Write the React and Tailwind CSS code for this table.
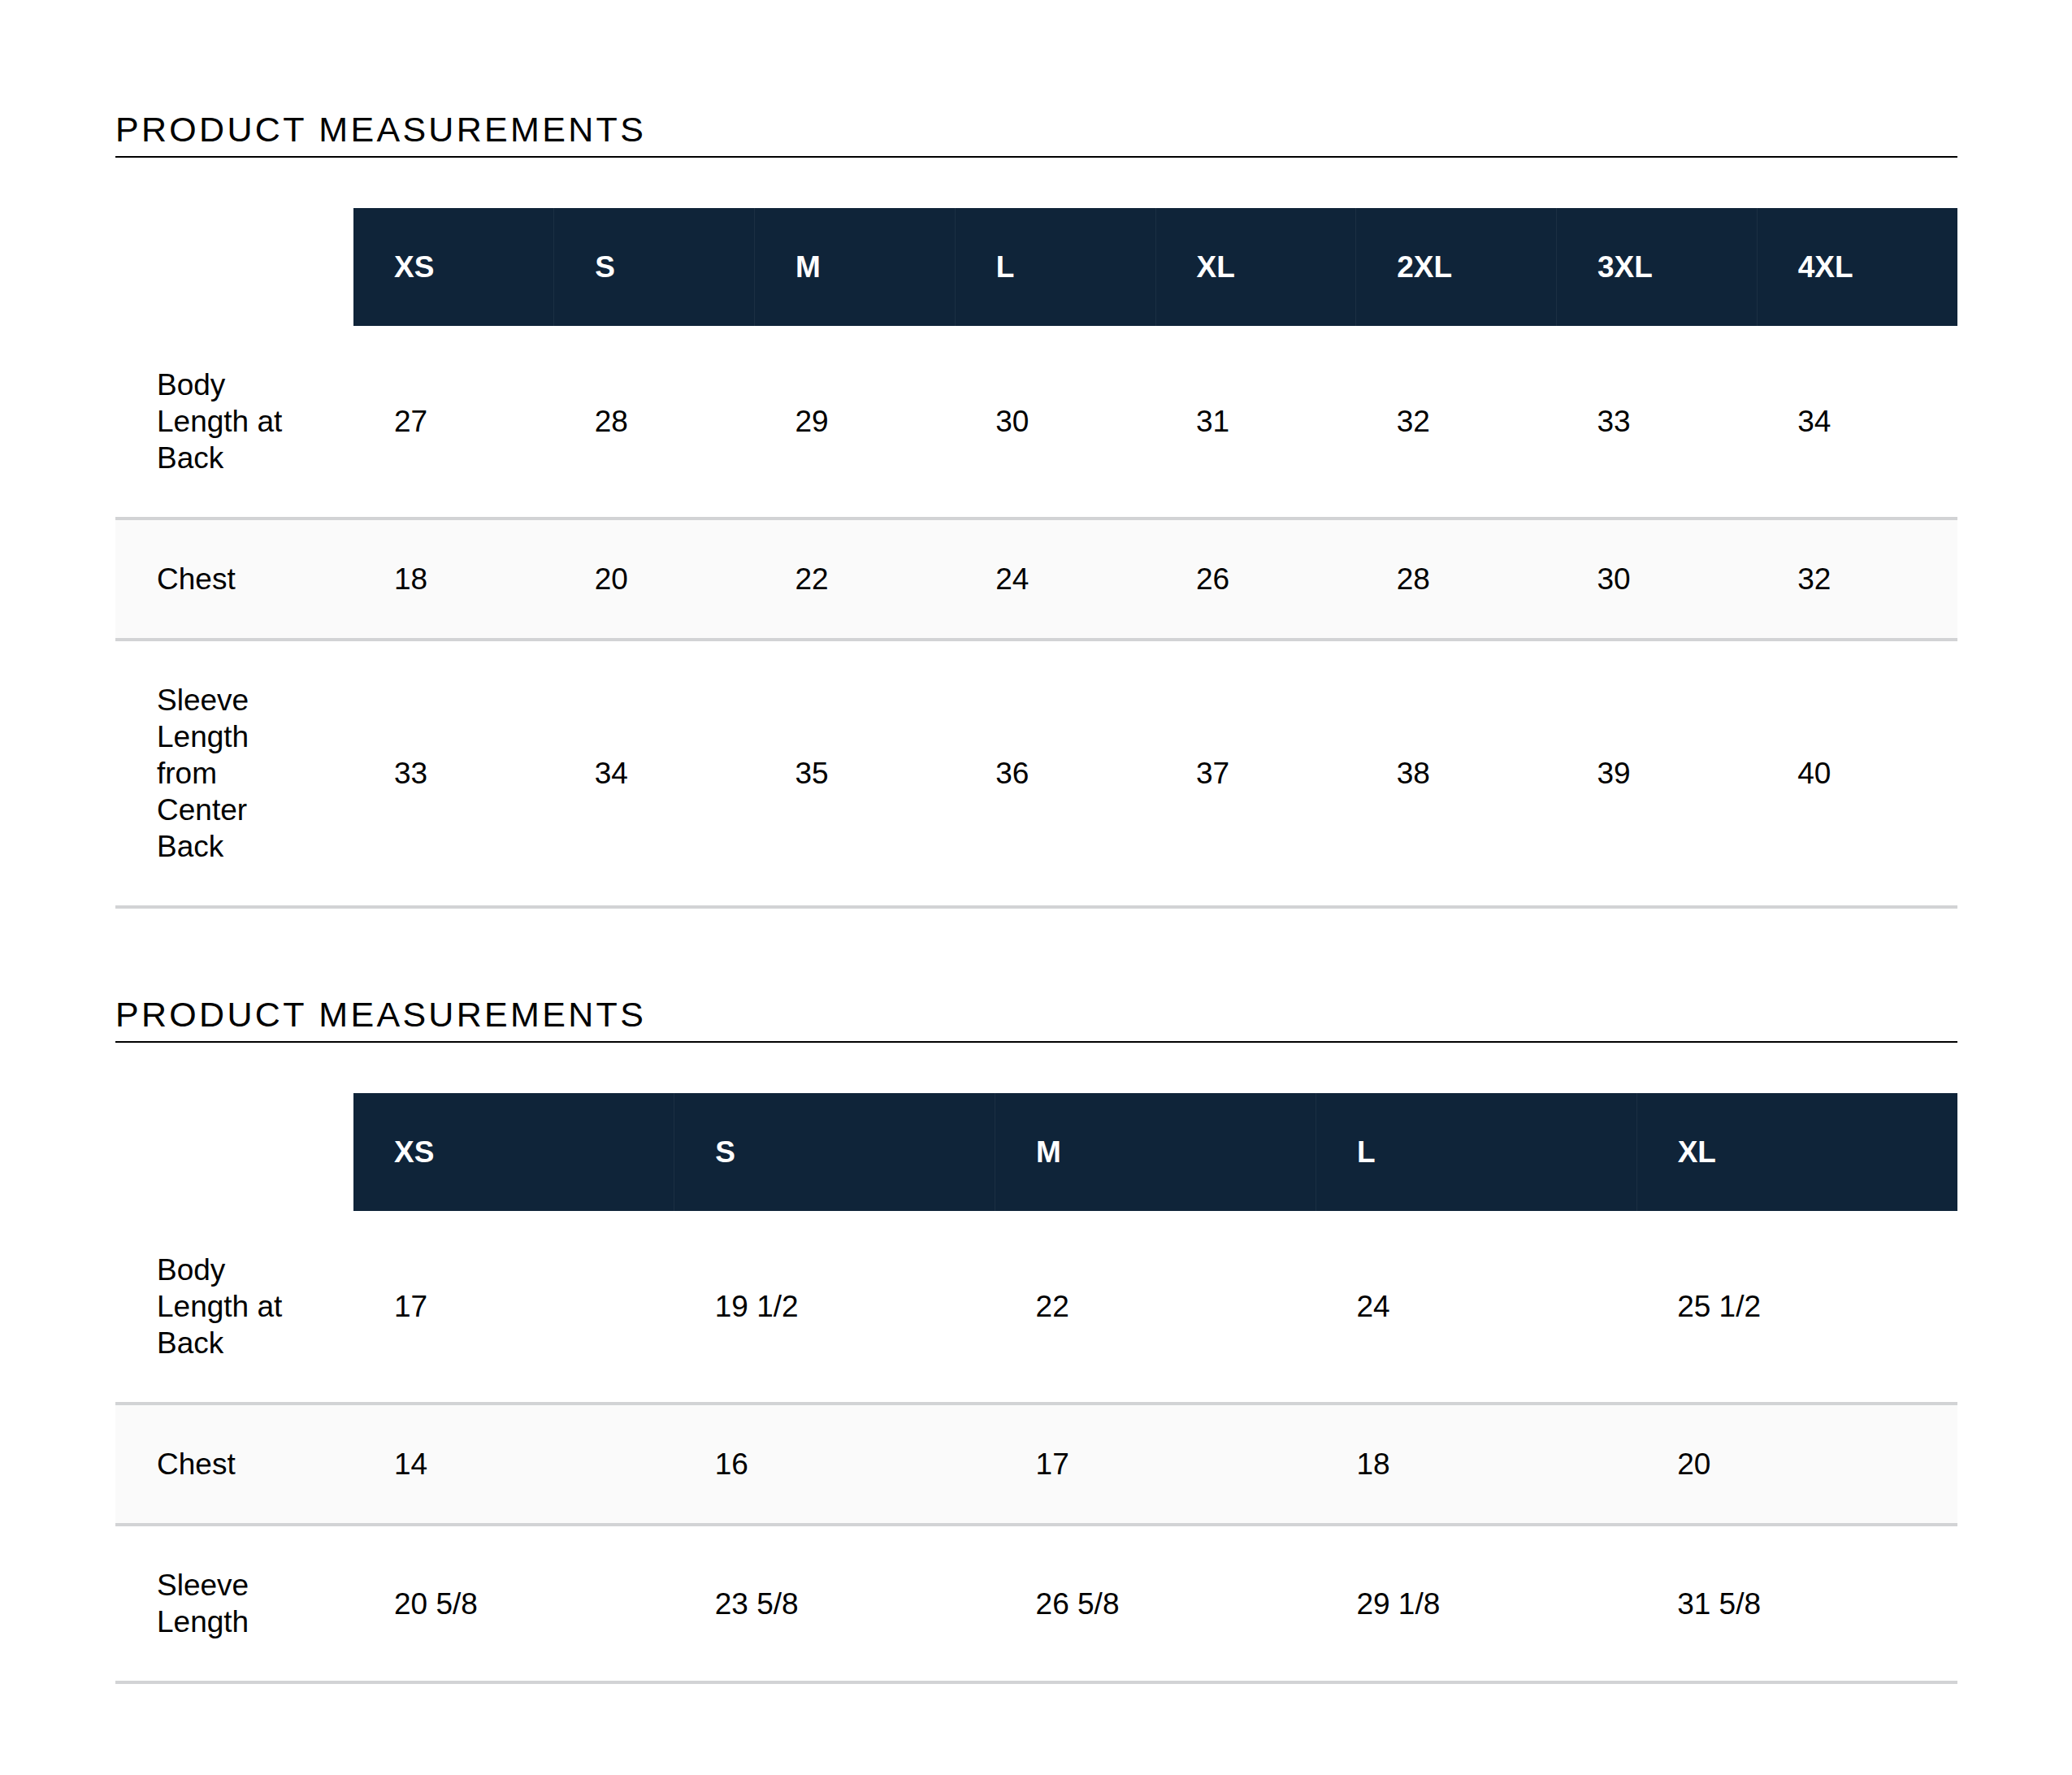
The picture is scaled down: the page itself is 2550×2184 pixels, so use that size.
import React from "react";

const tables = [
  {
    sizes: ["XS", "S", "M", "L", "XL", "2XL", "3XL", "4XL"],
    rows: [
      { label: "Body Length at Back", values: ["27", "28", "29", "30", "31", "32", "33", "34"] },
      { label: "Chest", values: ["18", "20", "22", "24", "26", "28", "30", "32"] },
      { label: "Sleeve Length from Center Back", values: ["33", "34", "35", "36", "37", "38", "39", "40"] },
    ],
  },
  {
    sizes: ["XS", "S", "M", "L", "XL"],
    rows: [
      { label: "Body Length at Back", values: ["17", "19 1/2", "22", "24", "25 1/2"] },
      { label: "Chest", values: ["14", "16", "17", "18", "20"] },
      { label: "Sleeve Length", values: ["20 5/8", "23 5/8", "26 5/8", "29 1/8", "31 5/8"] },
    ],
  },
];

function SizeTable({ sizes, rows }) {
  return (
    <table className="mt-[62px] w-full table-fixed border-collapse">
      <colgroup>
        <col className="w-[293px]" />
        {sizes.map((s) => (
          <col key={s} />
        ))}
      </colgroup>
      <thead>
        <tr>
          <th className="p-0" />
          {sizes.map((s, i) => (
            <th
              key={s}
              className={`bg-[#0f2439] px-[50px] py-[50px] text-left text-[37px] leading-[45px] font-bold text-white ${
                i > 0 ? "border-l border-[#1b2f43]" : ""
              }`}
            >
              {s}
            </th>
          ))}
        </tr>
      </thead>
      <tbody>
        {rows.map((row, ri) => (
          <tr key={row.label} className={ri === 1 ? "bg-[#fafafa]" : ""}>
            <td className="border-b-4 border-[#d2d3d5] py-[50px] pl-[51px] pr-[60px] text-[37px] leading-[45px] text-black">
              {row.label}
            </td>
            {row.values.map((v, vi) => (
              <td
                key={vi}
                className="border-b-4 border-[#d2d3d5] px-[50px] py-[50px] text-[37px] leading-[45px] text-black whitespace-nowrap"
              >
                {v}
              </td>
            ))}
          </tr>
        ))}
      </tbody>
    </table>
  );
}

export default function App() {
  return (
    <div className="min-h-screen bg-white pt-[133px] pb-[110px] pl-[142px] pr-[141px] font-['Liberation_Sans',Arial,sans-serif]">
      {tables.map((t, i) => (
        <section key={i} className={i < tables.length - 1 ? "mb-[104px]" : ""}>
          <h2 className="border-b-2 border-black pb-[7px] text-[43px] leading-[52px] font-normal tracking-[0.077em] text-black uppercase">
            Product Measurements
          </h2>
          <SizeTable sizes={t.sizes} rows={t.rows} />
        </section>
      ))}
    </div>
  );
}
